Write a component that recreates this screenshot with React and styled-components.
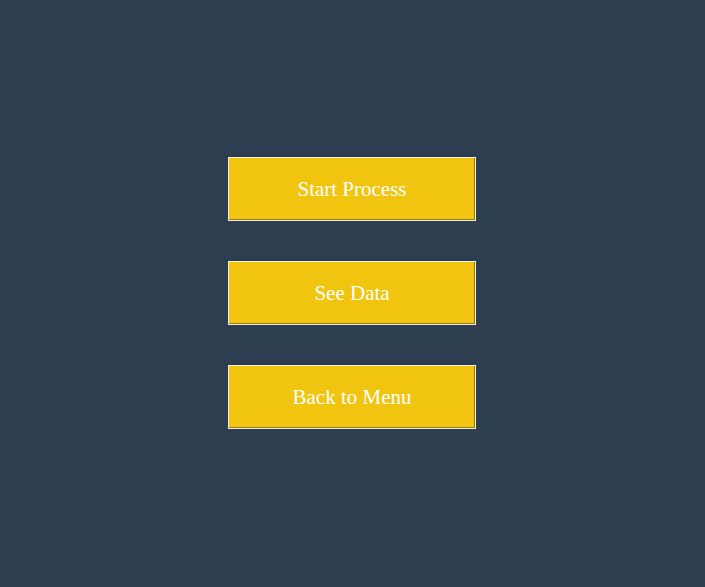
import React from "react";
import styled, { createGlobalStyle } from "styled-components";

const GlobalStyle = createGlobalStyle`
  html, body {
    margin: 0;
    padding: 0;
    background-color: #2c3e50;
  }
`;

export default function App() {
  const items = ["Start Process", "See Data", "Back to Menu"];

  return (
    <>
      <GlobalStyle />
      <Screen>
        <Menu>
          {items.map((label) => (
            <MenuButton key={label} type="button">
              {label}
            </MenuButton>
          ))}
        </Menu>
      </Screen>
    </>
  );
}

const Screen = styled.div`
  box-sizing: border-box;
  height: 100vh;
  width: 100vw;
  padding: 0 1px 1px 0;
  display: flex;
  align-items: center;
  justify-content: center;
  background-color: #2c3e50;
`;

const Menu = styled.div`
  display: flex;
  flex-direction: column;
  gap: 40px;
`;

const MenuButton = styled.button`
  width: 248px;
  height: 64px;
  padding: 0;
  background-color: #f1c40f;
  color: #ffffff;
  border: 1px solid #f2f0dc;
  box-shadow: inset -1px -1px 0 #9a7a10;
  font-family: "Liberation Serif", serif;
  font-size: 21px;
  cursor: pointer;
`;
